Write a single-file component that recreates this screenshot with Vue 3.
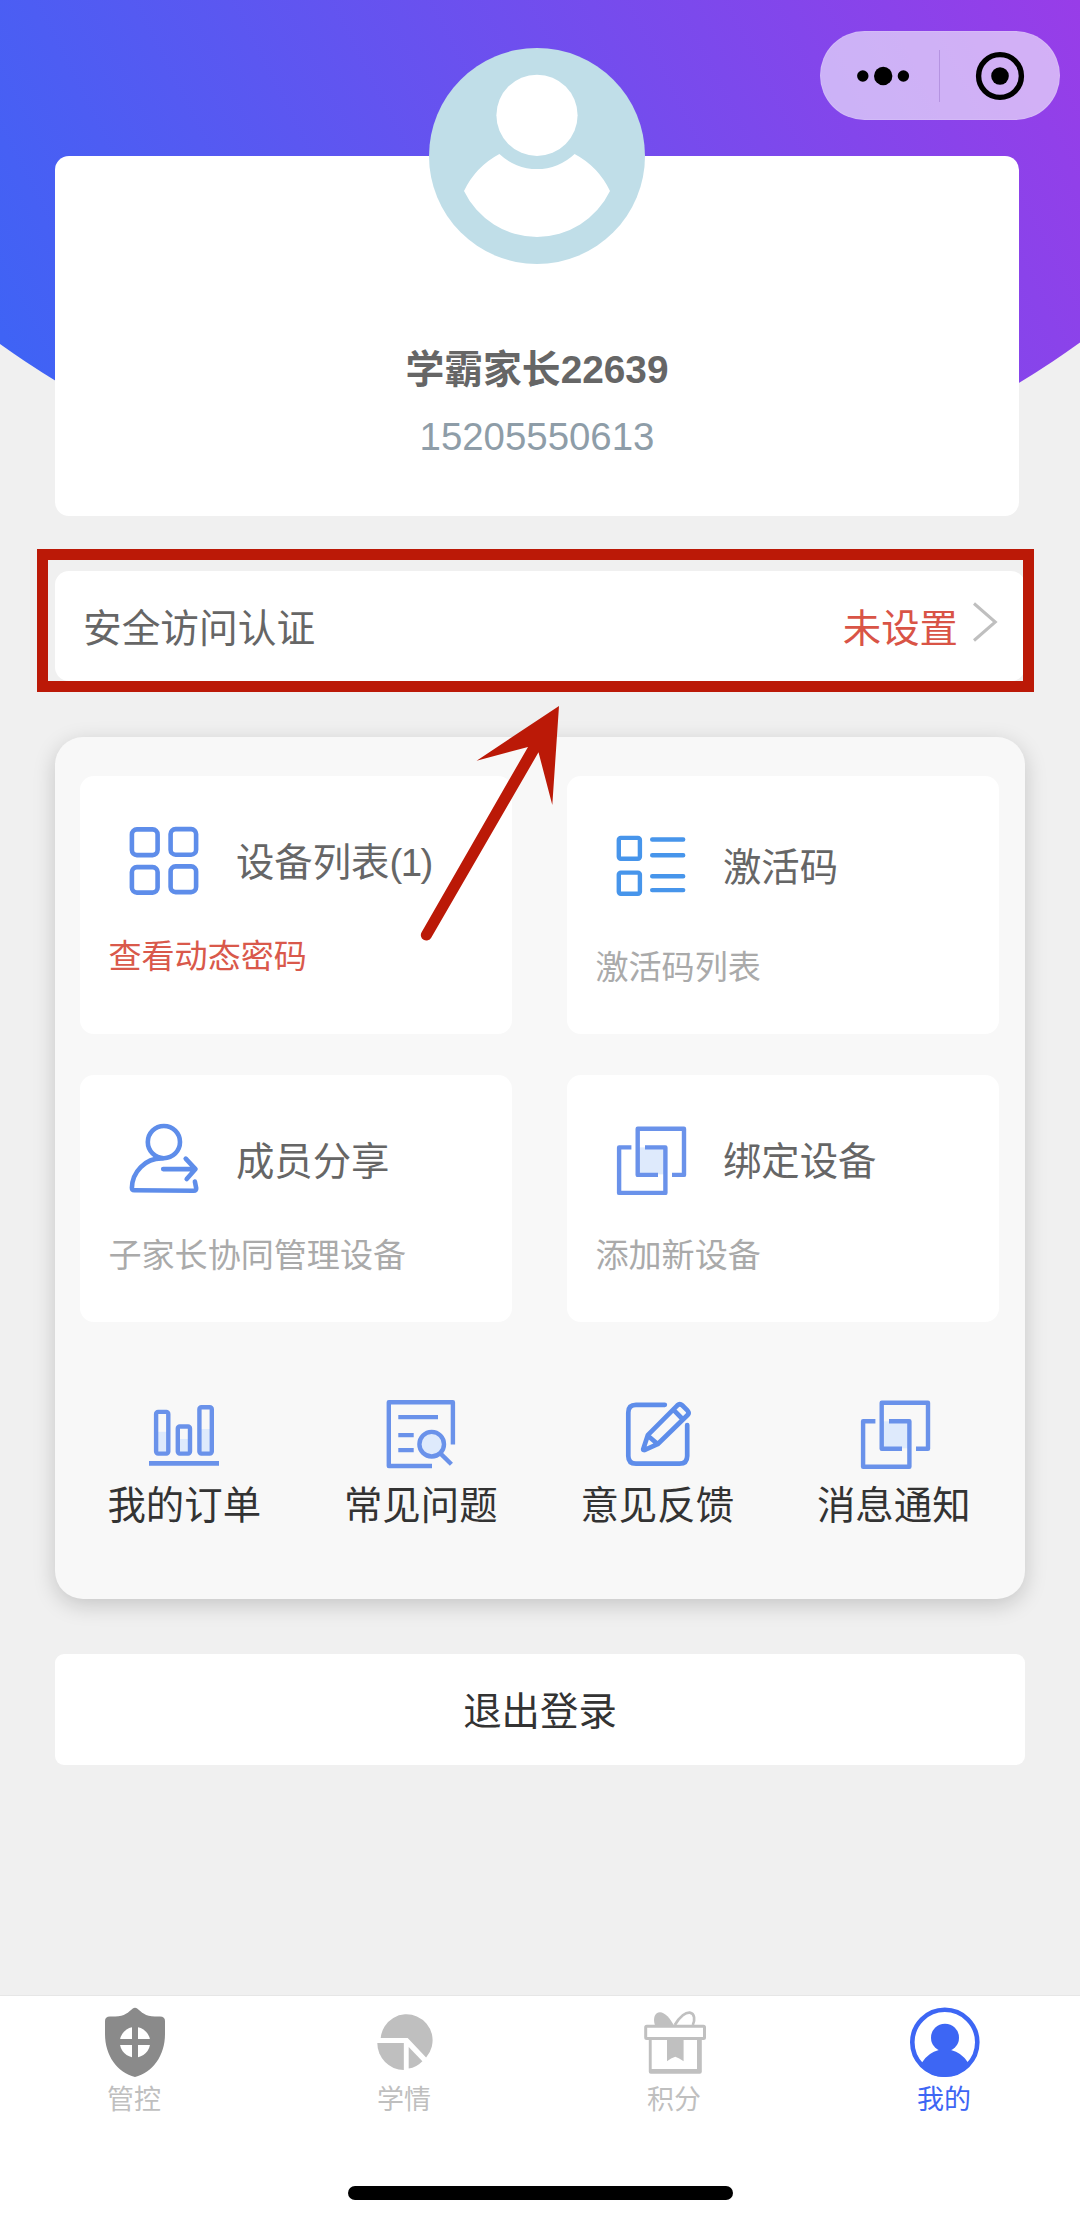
<script setup>
const features = [
  { icon: 'grid', title: '设备列表', count: '(1)', desc: '查看动态密码', alert: true },
  { icon: 'list', title: '激活码', desc: '激活码列表', loose: true },
  { icon: 'share', title: '成员分享', desc: '子家长协同管理设备' },
  { icon: 'bind', title: '绑定设备', desc: '添加新设备' },
]
const shortcuts = [
  { icon: 'orders', label: '我的订单' },
  { icon: 'faq', label: '常见问题' },
  { icon: 'feedback', label: '意见反馈' },
  { icon: 'notice', label: '消息通知' },
]
const tabs = [
  { icon: 'shield', label: '管控' },
  { icon: 'pie', label: '学情' },
  { icon: 'gift', label: '积分' },
  { icon: 'user', label: '我的', active: true },
]
</script>

<template>
  <div class="page">
    <div class="backdrop"><div class="arc"></div></div>

    <div class="capsule">
      <svg class="dots" width="52" height="24" viewBox="0 0 52 24">
        <circle cx="5.8" cy="12" r="5.7" /><circle cx="26.2" cy="12" r="9.2" /><circle cx="46.4" cy="12" r="5.7" />
      </svg>
      <span class="divider"></span>
      <svg class="target" width="50" height="50" viewBox="0 0 50 50">
        <circle cx="25" cy="25" r="21.4" fill="none" stroke="#000" stroke-width="5.4" />
        <circle cx="25" cy="25" r="8.8" />
      </svg>
    </div>

    <main class="content">
      <section class="profile">
        <svg class="avatar" width="216" height="216" viewBox="0 0 216 216">
          <circle cx="108" cy="108" r="108" fill="#c0dee8" />
          <circle cx="108" cy="67.3" r="40.6" fill="#fff" />
          <path d="M35 143A82 82 0 0 1 70.4 106A54.5 54.5 0 0 0 145.6 106A82 82 0 0 1 181 143A81 81 0 0 1 35 143Z" fill="#fff" />
        </svg>
        <div class="name">学霸家长22639</div>
        <div class="phone">15205550613</div>
      </section>

      <section class="auth">
        <span class="auth-label">安全访问认证</span>
        <span class="auth-state">未设置</span>
        <svg class="chevron" width="26" height="42" viewBox="0 0 26 42">
          <path d="M2 2.5L23.3 21L2 39.5" fill="none" stroke="#bfbfbf" stroke-width="3" />
        </svg>
      </section>

      <section class="panel">
        <div class="cards">
          <div v-for="f in features" :key="f.icon" class="card" :class="{ loose: f.loose }">
            <div class="card-head">
              <svg class="card-icon" width="72" height="74" viewBox="0 0 72 74" fill="none" stroke="#5e8dea" stroke-width="4.6">
                <g v-if="f.icon === 'grid'" transform="translate(-.7 .8)">
                  <rect x="4.6" y="4.6" width="25.7" height="25.7" rx="5" />
                  <rect x="43.3" y="4.3" width="25.5" height="25.6" rx="5" />
                  <rect x="4.6" y="42.3" width="25.7" height="25.5" rx="5" />
                  <rect x="43.3" y="41.6" width="25.5" height="25.7" rx="5" />
                </g>
                <g v-else-if="f.icon === 'list'" stroke="#4795eb" stroke-width="4.4" stroke-linecap="round" transform="translate(0 .8)">
                  <rect x="3.8" y="13.1" width="21.1" height="20.8" rx="2" />
                  <rect x="3.8" y="47.8" width="21.1" height="21.1" rx="2" />
                  <path d="M37.2 14.7H68.2M37.2 30.4H68.2M37.2 51.4H68.2M37.2 65.3H68.2" />
                </g>
                <g v-else-if="f.icon === 'share'" stroke-linecap="round" stroke-linejoin="round" transform="translate(-.8 -.6)">
                  <circle cx="36.7" cy="19.7" r="16.1" />
                  <path d="M35 36C18 35.7 5 49.5 4.7 65.5Q4.7 67.9 7 67.9L66.5 68.4Q69.2 68.2 69 65.8L67.7 59.2" />
                  <path d="M36 46.7H68M58.5 36.2L68.3 46.7L59.5 56.7" />
                </g>
                <g v-else stroke="#6a92ea" stroke-width="4.4" stroke-linejoin="round" transform="translate(0 -.6)">
                  <path d="M24 25H49V52H24Z" fill="#deeafc" stroke="none" />
                  <path d="M43 52.5H22.7V6.4H69V52.5H57" />
                  <path d="M16.4 25H4.1V70.5H50.4V25H30" />
                </g>
              </svg>
              <span class="card-title">{{ f.title }}<span v-if="f.count" class="count">{{ f.count }}</span></span>
            </div>
            <div class="card-desc" :class="{ alert: f.alert }">{{ f.desc }}</div>
          </div>
        </div>

        <div class="shortcuts">
          <div v-for="s in shortcuts" :key="s.icon" class="shortcut">
            <svg width="72" height="72" viewBox="0 0 72 72" fill="none" stroke="#6a92ea" stroke-width="4.4">
              <template v-if="s.icon === 'orders'">
                <path d="M10 32.7H18.5V53H10ZM31 40H40V53H31ZM53 30H62V53H53Z" fill="#deeafc" stroke="none" />
                <rect x="8.1" y="12.9" width="12.2" height="41.7" rx="2" />
                <rect x="29.8" y="27.5" width="12.2" height="27.1" rx="2" />
                <rect x="51.4" y="8.2" width="12.4" height="46.4" rx="2" />
                <path d="M1 64.4H71" stroke-width="4.6" />
              </template>
              <template v-else-if="s.icon === 'faq'">
                <path d="M67.9 45.5V3.3H3.8V67H47" stroke-linejoin="round" />
                <path d="M13.3 18.1H53M13.3 36.1H28.7M13.3 51.1H28.7" />
                <circle cx="46.7" cy="45.2" r="12.3" fill="#deeafc" />
                <path d="M55.6 54.6L66.4 65.2" />
              </template>
              <g v-else-if="s.icon === 'feedback'" stroke="#5e8dea" stroke-width="4.7" stroke-linecap="round" stroke-linejoin="round">
                <path d="M43.8 5.8H15Q7.3 5.8 7.3 13.5V57Q7.3 64.7 15 64.7H58.5Q66.2 64.7 66.2 57V26" />
                <path d="M22.2 50.2L26.8 36.2L56.4 6.3Q58.8 4 61.2 6.3L66.6 11.7Q68.6 14 66.6 16L36.6 45.2L25 50.3Q22 51.8 22.2 50.2ZM53.3 11.6L61.5 20M27.2 37L36 44.5" />
              </g>
              <g v-else stroke-linejoin="round" transform="translate(1 -2.7)">
                <path d="M24 25H49V52H24Z" fill="#deeafc" stroke="none" />
                <path d="M43 52.5H22.7V6.4H69V52.5H57" />
                <path d="M16.4 25H4.1V70.5H50.4V25H30" />
              </g>
            </svg>
            <span>{{ s.label }}</span>
          </div>
        </div>
      </section>

      <button class="logout">退出登录</button>
    </main>

    <footer class="tabbar">
      <nav class="tabs">
        <div v-for="t in tabs" :key="t.icon" class="tab" :class="{ active: t.active }">
          <svg width="72" height="72" viewBox="0 0 72 72">
            <template v-if="t.icon === 'shield'">
              <path d="M33.5 2.8Q36 .7 38.5 2.8C42.5 6.2 46.5 10.7 56.5 10.5H61Q66 10.5 66 15V28C66 50 53.5 66.5 36 71C18.5 66.5 6 50 6 28V15Q6 10.5 11 10.5H15.5C25.5 10.7 29.5 6.2 33.5 2.8Z" fill="#8a8a8a" />
              <circle cx="36" cy="36.2" r="15.2" fill="#fff" />
              <path d="M36 20V53M19 36.1H53" stroke="#8a8a8a" stroke-width="6" />
            </template>
            <g v-else-if="t.icon === 'pie'" fill="#bfbfbf" transform="translate(-.5 0)">
              <path d="M12.2 32A26 26 0 1 1 57.6 51.5L39.2 32Z" />
              <path d="M8.8 37H35.3V64A26.7 27 0 0 1 8.8 37Z" />
              <path d="M40.2 41L53.9 55.3Q48 61.5 40.2 62.5Z" />
            </g>
            <g v-else-if="t.icon === 'gift'" fill="none" stroke="#c0c0c0" stroke-width="3">
              <path d="M16 19.5C13.5 12 16 6.3 21 6.3C26 6.3 31.5 13 34.6 19Z" fill="#c0c0c0" stroke="none" />
              <path d="M35.8 19C41 10 47 6.2 50.8 6.6C55.8 7.4 56.2 14 53.8 19" stroke-width="2.7" />
              <rect x="6.7" y="20.2" width="58.8" height="12.3" rx="1" />
              <path d="M9.8 33H12.7V63H58V33H62.8V65.7Q62.8 67.7 60.8 67.7H11.8Q9.8 67.7 9.8 65.7Z" fill="#c0c0c0" stroke="none" />
              <path d="M28 33H44.6V55.3Q40 51.8 36.3 50.7Q32 51.8 28 55.3Z" fill="#c0c0c0" stroke="none" />
            </g>
            <g v-else fill="#3d66f4">
              <circle cx="35.8" cy="36.3" r="32.5" fill="none" stroke="#3d66f4" stroke-width="4.6" />
              <circle cx="36" cy="31.7" r="14" />
              <path d="M29.8 42H42V44Q52.5 46.5 58.8 56.3L61 58Q51 71 35.8 71Q20.5 71 11 58L13.2 56.3Q19.5 46.5 29.8 44Z" />
            </g>
          </svg>
          <span>{{ t.label }}</span>
        </div>
      </nav>
      <div class="home-bar"></div>
    </footer>

    <div class="highlight"></div>
    <svg class="pointer" width="160" height="260" viewBox="410 700 160 260">
      <path d="M559 706L476.6 760.7L528 747L421.6 932.2A5.5 5.5 0 0 0 431.2 937.8L538.5 752.3L552.3 805Z" fill="#bb1907" />
    </svg>
  </div>
</template>

<style>
body { margin: 0; background: #f0f0f0; }
</style>

<style scoped>
.page {
  position: relative;
  display: flex;
  flex-direction: column;
  width: 1080px;
  height: 2222px;
  overflow: hidden;
  background: #f0f0f0;
  font-family: "Liberation Sans", "Noto Sans CJK SC", sans-serif;
  font-size: 38.4px;
  color: #666;
}
.page svg { display: block; flex: none; overflow: visible; }
.backdrop { position: absolute; top: 0; left: 0; width: 1080px; height: 516px; overflow: hidden; }
.arc {
  width: 100%;
  height: 100%;
  background: linear-gradient(63deg, #3f63f5 7%, #983de8 100%);
  clip-path: circle(926px at 539px -409px);
}
.capsule {
  position: absolute;
  top: 31px;
  left: 820px;
  display: flex;
  align-items: center;
  box-sizing: border-box;
  width: 240px;
  height: 89px;
  padding-left: 36px;
  border: 1px solid rgba(255, 255, 255, .12);
  border-radius: 45px;
  background: rgba(255, 255, 255, .59);
}
.divider { width: 1px; height: 52px; margin-left: 30px; background: rgba(90, 40, 150, .22); }
.target { margin-left: 35px; }
.content { position: relative; display: flex; flex-direction: column; flex: 1; padding: 156px 55px 0; }
.profile {
  display: flex;
  flex-direction: column;
  align-items: center;
  width: 964px;
  height: 360px;
  border-radius: 14px;
  background: #fff;
}
.avatar { margin-top: -108px; }
.name { margin-top: 78px; font-size: 38.8px; line-height: 56px; font-weight: 700; }
.phone { margin-top: 11px; line-height: 56px; color: #8e9da8; }
.auth {
  display: flex;
  align-items: center;
  box-sizing: border-box;
  height: 110px;
  margin-top: 55px;
  padding: 0 27px 0 28px;
  border-radius: 14px;
  background: #fff;
}
.auth-label { flex: 1; padding-bottom: 3px; font-size: 38.7px; }
.auth-state { margin-right: 14px; padding-bottom: 3px; color: #d95446; }
.chevron { margin-top: -9px; }
.panel {
  box-sizing: border-box;
  height: 862px;
  margin-top: 56px;
  padding: 39px 0 0;
  border-radius: 28px;
  background: #f8f8f8;
  box-shadow: 0 6px 22px rgba(0, 0, 0, .18);
}
.cards {
  display: grid;
  grid-template-columns: 432px 432px;
  grid-template-rows: 258px 247px;
  gap: 41px 55px;
  padding-left: 25.4px;
}
.card { border-radius: 14px; background: #fff; }
.card-head { display: flex; align-items: center; height: 74px; padding: 48px 0 0 48px; }
.card-title { margin-left: 35.5px; padding-top: 3px; line-height: 56px; }
.count { letter-spacing: -1.6px; }
.card-desc { margin: 35px 0 0 28px; font-size: 33.1px; line-height: 48px; color: #aaa; }
.card-desc.alert { color: #d9594b; }
.loose .card-title { padding-top: 14px; }
.loose .card-desc { margin-top: 46px; }
.shortcuts { display: flex; padding: 77px 13px 0 11px; }
.shortcut { display: flex; flex: 1; flex-direction: column; align-items: center; line-height: 56px; color: #333; }
.shortcut span { margin-top: 7px; }
.logout {
  height: 111px;
  margin-top: 55px;
  padding: 0 0 4px;
  border: 0;
  border-radius: 9px;
  background: #fff;
  font: inherit;
  color: #333;
}
.tabbar { box-sizing: border-box; height: 227px; border-top: 1px solid #e6e6e6; background: #fff; }
.tabs { display: flex; height: 190px; }
.tab { display: flex; flex: 1; flex-direction: column; align-items: center; padding-top: 10px; font-size: 27px; line-height: 40px; color: #bfbfbf; }
.tab span { margin: 2px 2px 0 0; }
.tab.active { color: #3d66f4; }
.home-bar { width: 385px; height: 14px; margin: 0 auto; border-radius: 7px; background: #000; }
.highlight {
  position: absolute;
  top: 549px;
  left: 37px;
  box-sizing: border-box;
  width: 997px;
  height: 143px;
  border: 11px solid #bb1907;
}
.pointer { position: absolute; top: 700px; left: 410px; }
</style>
